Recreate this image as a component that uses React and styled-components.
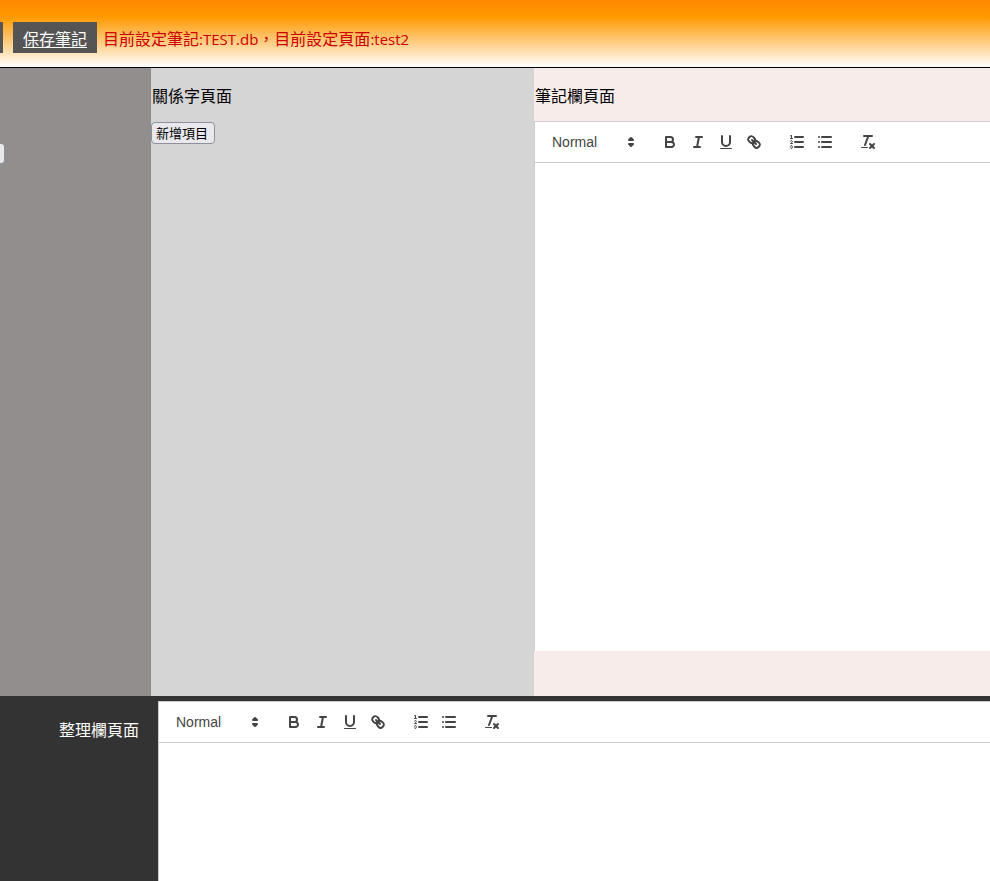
import React from "react";
import styled, { createGlobalStyle } from "styled-components";

const GlobalStyle = createGlobalStyle`
  *, *::before, *::after { box-sizing: border-box; }
  body {
    margin: 0;
    font-family: "Noto Sans", "Noto Sans CJK TC", sans-serif;
    font-size: 16px;
    line-height: 21px;
    color: #000;
  }
`;

const Page = styled.div`
  display: flex;
  flex-direction: column;
  min-height: 100vh;
  overflow-x: hidden;
`;

const Header = styled.header`
  display: flex;
  align-items: center;
  height: 68px;
  padding-top: 8px;
  border-bottom: 1px solid #000;
  background: linear-gradient(#ff8800, #ff9900 25%, #ffffff);
`;

const MenuLink = styled.a`
  padding: 7px 10px 3px;
  background: #555;
  color: #fff;
  text-decoration: underline;
  text-underline-offset: 2px;
`;

const MenuEdge = styled.span`
  width: 3px;
  height: 31px;
  margin-right: 10px;
  background: #555;
`;

const Status = styled.span`
  padding: 7px 6px 3px;
  color: #cc0000;
`;

const StatusValue = styled.span`
  font-family: "Open Sans", "Noto Sans", sans-serif;
  font-size: 15px;
`;

const Columns = styled.main`
  display: grid;
  grid-template-columns: 151px 383px minmax(0, 1fr);
`;

const Column = styled.section`
  background: ${(p) => p.$tone};
  padding-bottom: ${(p) => p.$bottom || 0}px;
`;

const Title = styled.p`
  margin: 0;
  padding: 18px 0 14px 1px;
`;

const SmallButton = styled.button`
  display: block;
  height: 22px;
  margin-top: 1px;
  padding: 0 6px 0 4px;
  border: 1px solid #8f8f9d;
  border-radius: 4px;
  background: #e9e9ed;
  color: #000;
  font-family: inherit;
  font-size: 13px;
  line-height: 20px;
`;

const ButtonEdge = styled.span`
  display: block;
  width: 5px;
  height: 21px;
  margin-top: 75px;
  border: 1px solid #8f8f9d;
  border-left: 0;
  border-radius: 0 4px 4px 0;
  background: #e9e9ed;
`;

const Footer = styled.footer`
  flex: 1;
  display: grid;
  grid-template-columns: 158px minmax(0, 1fr);
  padding-top: 5px;
  background: #333;
`;

const FooterTitle = styled.p`
  margin: 0;
  padding: 19px 19px 0 0;
  text-align: right;
  color: #fff;
`;

const EditorBox = styled.div`
  display: flex;
  flex-direction: column;
  border-left: 1px solid #ccc;
  background: #fff;
`;

const Toolbar = styled.div`
  display: flex;
  gap: 15px;
  padding: 8px;
  border: solid #ccc;
  border-width: 1px 0;
`;

const Group = styled.div`
  display: flex;
`;

const Tool = styled.button`
  width: 28px;
  height: 24px;
  padding: 3px 5px;
  border: 0;
  background: none;
  cursor: pointer;
`;

const Picker = styled.label`
  display: flex;
  align-items: center;
  position: relative;
  width: 98px;
  height: 24px;
`;

const PickerSelect = styled.select`
  appearance: none;
  width: 100%;
  height: 24px;
  padding: 0 20px 0 8px;
  border: 1px solid transparent;
  background: none;
  color: #444;
  font-family: "Liberation Sans", Arial, sans-serif;
  font-size: 14px;
  line-height: 22px;
`;

const Icon = styled.svg`
  display: block;
  width: 18px;
  height: 18px;
  fill: none;
  stroke: #444;
  stroke-width: 2;
  stroke-linecap: round;
  stroke-linejoin: round;

  .fill { fill: #444; stroke: none; }
  .solid { fill: #444; }
  .thin { stroke-width: 1; }
`;

const PickerIcon = styled(Icon)`
  position: absolute;
  right: 1px;
  pointer-events: none;
`;

const Body = styled.div`
  flex: 1;
  min-height: ${(p) => p.$min}px;
  padding: 12px 15px;
  outline: none;
`;

const icons = {
  bold: (
    <>
      <path d="M5,4H9.5A2.5,2.5,0,0,1,12,6.5v0A2.5,2.5,0,0,1,9.5,9H5A0,0,0,0,1,5,9V4A0,0,0,0,1,5,4Z" />
      <path d="M5,9h5.5A2.5,2.5,0,0,1,13,11.5v0A2.5,2.5,0,0,1,10.5,14H5a0,0,0,0,1,0,0V9A0,0,0,0,1,5,9Z" />
    </>
  ),
  italic: (
    <>
      <line x1="7" x2="13" y1="4" y2="4" />
      <line x1="5" x2="11" y1="14" y2="14" />
      <line x1="8" x2="10" y1="14" y2="4" />
    </>
  ),
  underline: (
    <>
      <path d="M5,3V9a4.012,4.012,0,0,0,4,4H9a4.012,4.012,0,0,0,4-4V3" />
      <rect className="fill" height="1" rx="0.5" ry="0.5" width="12" x="3" y="15" />
    </>
  ),
  link: (
    <>
      <line x1="7" x2="11" y1="7" y2="11" />
      <path d="M8.9,4.577a3.476,3.476,0,0,1,.36,4.679A3.476,3.476,0,0,1,4.577,8.9C3.185,7.5,2.035,6.4,4.217,4.217S7.5,3.185,8.9,4.577Z" />
      <path d="M13.423,9.1a3.476,3.476,0,0,0-4.679-.36,3.476,3.476,0,0,0,.36,4.679c1.392,1.392,2.5,2.542,4.679.36S14.815,10.5,13.423,9.1Z" />
    </>
  ),
  ordered: (
    <>
      <line x1="7" x2="15" y1="4" y2="4" />
      <line x1="7" x2="15" y1="9" y2="9" />
      <line x1="7" x2="15" y1="14" y2="14" />
      <line className="thin" x1="2.5" x2="4.5" y1="5.5" y2="5.5" />
      <path className="fill" d="M3.5,6A0.5,0.5,0,0,1,3,5.5V3.085l-0.276.138A0.5,0.5,0,0,1,2.053,3c-0.124-.247-0.023-0.324.224-0.447l1-.5A0.5,0.5,0,0,1,4,2.5v3A0.5,0.5,0,0,1,3.5,6Z" />
      <path className="thin" d="M4.5,10.5h-2c0-.234,1.85-1.076,1.85-2.234A0.959,0.959,0,0,0,2.5,8.156" />
      <path className="thin" d="M2.5,14.846a0.959,0.959,0,0,0,1.85-.109A0.7,0.7,0,0,0,3.75,14a0.688,0.688,0,0,0,.6-0.736,0.959,0.959,0,0,0-1.85-.109" />
    </>
  ),
  bullet: (
    <>
      <line x1="6" x2="15" y1="4" y2="4" />
      <line x1="6" x2="15" y1="9" y2="9" />
      <line x1="6" x2="15" y1="14" y2="14" />
      <line x1="3" x2="3" y1="4" y2="4" />
      <line x1="3" x2="3" y1="9" y2="9" />
      <line x1="3" x2="3" y1="14" y2="14" />
    </>
  ),
  clean: (
    <>
      <line x1="5" x2="13" y1="3" y2="3" />
      <line x1="6" x2="9.35" y1="12" y2="3" />
      <line x1="11" x2="15" y1="11" y2="15" />
      <line x1="15" x2="11" y1="11" y2="15" />
      <rect className="fill" height="1" rx="0.5" ry="0.5" width="7" x="2" y="14" />
    </>
  ),
};

const groups = [
  [["bold", "Bold"], ["italic", "Italic"], ["underline", "Underline"], ["link", "Link"]],
  [["ordered", "Numbered list"], ["bullet", "Bulleted list"]],
  [["clean", "Clear formatting"]],
];

function Editor({ label, minHeight }) {
  return (
    <EditorBox>
      <Toolbar role="toolbar" aria-label={label}>
        <Picker>
          <PickerSelect aria-label="Text style" defaultValue="Normal">
            <option>Normal</option>
          </PickerSelect>
          <PickerIcon viewBox="0 0 18 18" aria-hidden="true">
            <polygon className="solid" points="7 11 9 13 11 11 7 11" />
            <polygon className="solid" points="7 7 9 5 11 7 7 7" />
          </PickerIcon>
        </Picker>
        {groups.map((tools) => (
          <Group key={tools[0][0]}>
            {tools.map(([name, title]) => (
              <Tool key={name} type="button" aria-label={title}>
                <Icon viewBox="0 0 18 18" aria-hidden="true">{icons[name]}</Icon>
              </Tool>
            ))}
          </Group>
        ))}
      </Toolbar>
      <Body
        $min={minHeight}
        contentEditable
        suppressContentEditableWarning
        role="textbox"
        aria-multiline="true"
        aria-label={label}
      />
    </EditorBox>
  );
}

export default function App() {
  return (
    <Page>
      <GlobalStyle />
      <Header>
        <MenuEdge />
        <MenuLink href="#save">保存筆記</MenuLink>
        <Status>
          目前設定筆記<StatusValue>:TEST.db</StatusValue>，目前設定頁面<StatusValue>:test2</StatusValue>
        </Status>
      </Header>
      <Columns>
        <Column $tone="#928e8d">
          <ButtonEdge />
        </Column>
        <Column $tone="#d5d5d5">
          <Title>關係字頁面</Title>
          <SmallButton type="button">新增項目</SmallButton>
        </Column>
        <Column $tone="#f8eceb" $bottom={45}>
          <Title>筆記欄頁面</Title>
          <Editor label="筆記欄頁面" minHeight={488} />
        </Column>
      </Columns>
      <Footer>
        <FooterTitle>整理欄頁面</FooterTitle>
        <Editor label="整理欄頁面" minHeight={120} />
      </Footer>
    </Page>
  );
}
